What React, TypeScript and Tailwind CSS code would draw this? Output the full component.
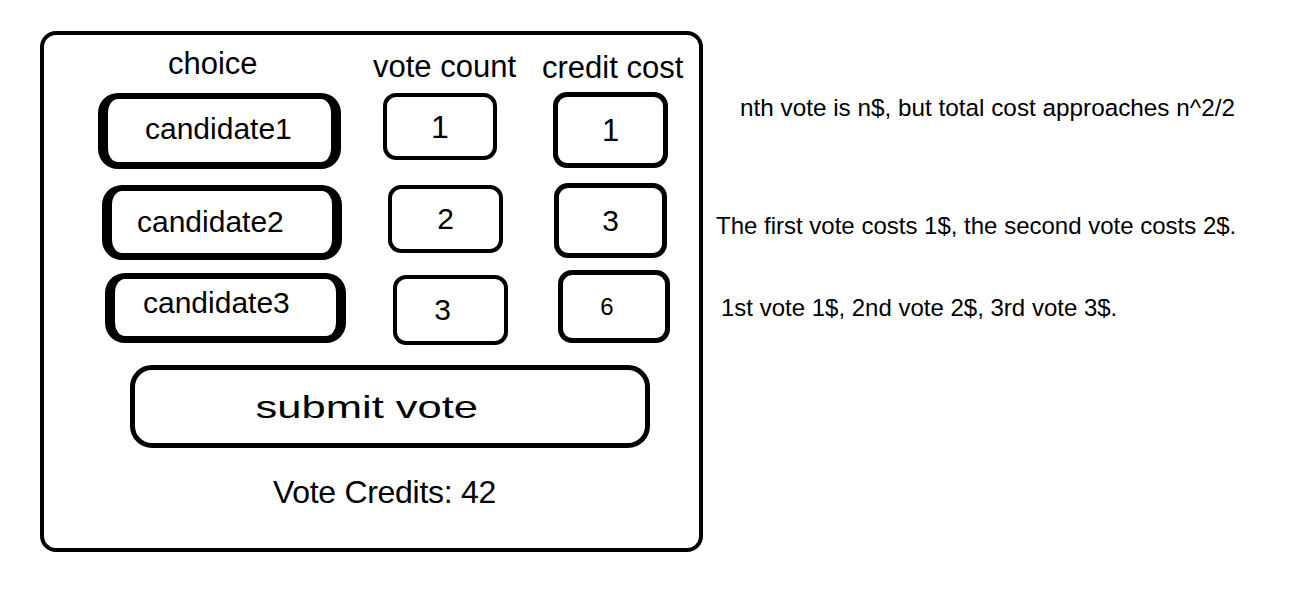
const rows = [
  {
    name: 'candidate1',
    count: '1',
    cost: '1',
    row: 'mt-[12px]',
    choiceBox: 'ml-[54px] mt-[1px] w-[243px] h-[76px] pl-[37px] pb-[4px]',
    countBox: 'ml-[42px] mt-[1px] w-[114px] h-[67px] text-[32px]',
    costBox: 'ml-[56px] w-[115px] h-[76px] text-[31px]',
  },
  {
    name: 'candidate2',
    count: '2',
    cost: '3',
    row: 'mt-[14px]',
    choiceBox: 'ml-[58px] mt-[2px] w-[240px] h-[75px] pl-[25px]',
    countBox: 'ml-[46px] mt-[2px] w-[115px] h-[68px] text-[30px]',
    costBox: 'ml-[51px] w-[113px] h-[75px] text-[30px]',
  },
  {
    name: 'candidate3',
    count: '3',
    cost: '6',
    row: 'mt-[10px]',
    choiceBox: 'ml-[61px] mt-[3px] w-[241px] h-[70px] pl-[28px] pb-[10px]',
    countBox: 'ml-[47px] mt-[5px] w-[115px] h-[70px] text-[30px] pr-[16px]',
    costBox: 'ml-[50px] w-[112px] h-[73px] text-[24px] pr-[14px]',
  },
]

export default function App() {
  return (
    <div className="flex items-start w-[1304px] min-h-[589px] bg-white text-black font-['Liberation_Sans',Arial,sans-serif]">
      {/* voting card */}
      <div className="shrink-0 mt-[31px] ml-[40px] w-[663px] h-[521px] rounded-[16px] border-4 border-black pt-[13px]">
        <div className="flex items-start h-[32px] text-[31px] leading-none whitespace-nowrap">
          <div className="ml-[124px] w-[205px]">choice</div>
          <div className="mt-[3px] w-[169px]">vote count</div>
          <div className="mt-[4px]">credit cost</div>
        </div>

        {rows.map((r) => (
          <div key={r.name} className={`flex items-start ${r.row}`}>
            <div
              className={`flex items-center shrink-0 rounded-[20px] border-x-[10px] border-t-[6px] border-b-[7px] border-black text-[30px] leading-none ${r.choiceBox}`}
            >
              {r.name}
            </div>
            <div
              className={`flex items-center justify-center shrink-0 rounded-[13px] border-4 border-black leading-none ${r.countBox}`}
            >
              {r.count}
            </div>
            <div
              className={`flex items-center justify-center shrink-0 rounded-[14px] border-[5px] border-black leading-none ${r.costBox}`}
            >
              {r.cost}
            </div>
          </div>
        ))}

        <div className="flex items-center justify-center ml-[86px] mt-[20px] w-[520px] h-[83px] rounded-[22px] border-[5px] border-black pr-[46px]">
          <span className="inline-block text-[32px] leading-none scale-x-[1.36]">submit vote</span>
        </div>

        <div className="ml-[229px] mt-[28px] text-[32px] leading-none tracking-[-0.3px] whitespace-nowrap">
          Vote Credits: 42
        </div>
      </div>

      {/* notes */}
      <div className="flex flex-col items-start pt-[96px] text-[24px] leading-none whitespace-nowrap">
        <div className="ml-[37px] text-[24.3px]">nth vote is n$, but total cost approaches n^2/2</div>
        <div className="ml-[13px] mt-[94px]">The first vote costs 1$, the second vote costs 2$.</div>
        <div className="ml-[18px] mt-[58px]">1st vote 1$, 2nd vote 2$, 3rd vote 3$.</div>
      </div>
    </div>
  )
}
